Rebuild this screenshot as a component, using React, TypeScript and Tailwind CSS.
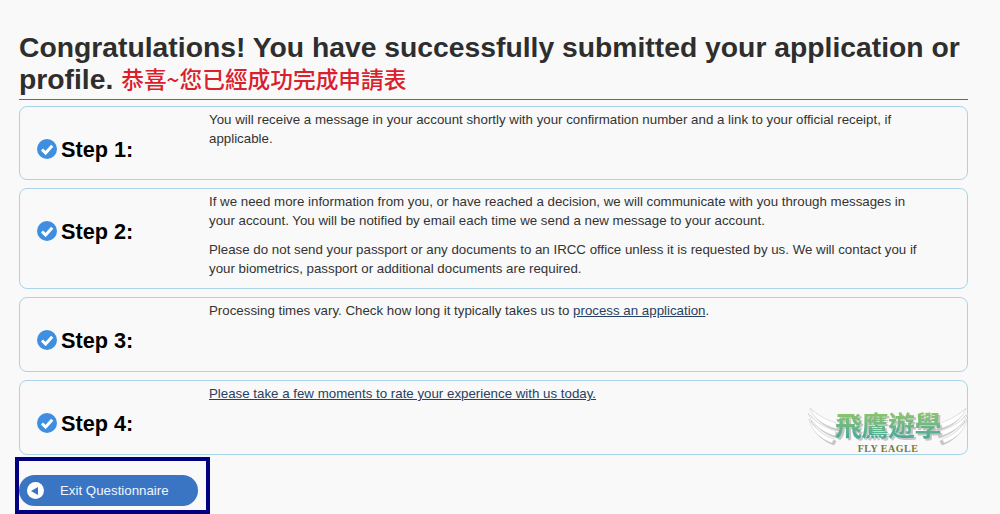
const CheckBadge = () => (
  <svg width="20" height="20" viewBox="0 0 20 20" className="mb-[3px] shrink-0">
    <circle cx="10" cy="10" r="10" fill="#3f8fe0" />
    <path d="M5 10.5 L8.6 14 L15.2 6.8" fill="none" stroke="#ffffff" strokeWidth="3" />
  </svg>
)

const Wing = ({ flip }: { flip?: boolean }) => (
  <svg
    width="30"
    height="38"
    viewBox="0 0 30 38"
    className={`drop-shadow-[2px_2px_0_#c2c2c2] ${flip ? "-scale-x-100" : ""}`}
  >
    <g fill="#ffffff" stroke="#d4d4d4" strokeWidth="0.7">
      <path d="M1 12 C3 22 10 31 24 36 L26 32 C16 29 7 22 1 12 Z" />
      <path d="M0 6 C3 15 11 24 27 29 L28 24 C17 21 7 15 0 6 Z" />
      <path d="M2 1 C4 9 13 18 29 22 L28 16 C19 13 9 8 2 1 Z" />
    </g>
  </svg>
)

const Watermark = () => (
  <div className="absolute left-[808px] top-[407px] flex h-[48px] w-[160px] items-start justify-between">
    <Wing />
    <Wing flip />
    <div className="absolute inset-0 flex flex-col items-center">
      <span className="mt-[3px] h-[30px] bg-gradient-to-b from-[#93c85f] to-[#3fa89c] bg-clip-text text-[27px] leading-[30px] font-bold tracking-[-0.5px] text-transparent drop-shadow-[2px_2px_0_#c4c4c4] font-['Noto_Sans_CJK_TC',sans-serif]">
        飛鷹遊學
      </span>
      <span className="mt-[4px] text-[10px] leading-[10px] font-bold tracking-[0.5px] text-[#77783a] font-['Liberation_Serif',serif]">
        FLY EAGLE
      </span>
    </div>
  </div>
)

function StepCard({ label, height, children }: { label: string; height: string; children: React.ReactNode }) {
  return (
    <div className={`flex rounded-[8px] border border-[#a9d3e6] ${height}`}>
      <div className="w-[189px] shrink-0 pl-[17px] pt-[30px]">
        <div className="flex items-center gap-[4px]">
          <CheckBadge />
          <span className="text-[21.7px] leading-[26px] font-bold text-black">{label}</span>
        </div>
      </div>
      <div className="flex-1 pr-[42px] pt-[3px] text-[13.3px] leading-[19px] text-[#333333]">{children}</div>
    </div>
  )
}

export default function App() {
  return (
    <div className="relative h-[514px] w-[1000px] overflow-hidden bg-[#f9f9f9] font-['Liberation_Sans',sans-serif]">
      <div className="pl-[19px] pr-[32px] pt-[32px]">
        {/* Heading */}
        <h1 className="pb-[4px] text-[28.3px] leading-[31px] font-bold text-[#2e2e2e]">
          Congratulations! You have successfully submitted your application or profile.{" "}
          <span className="align-[1px] text-[22.7px] font-medium text-[#d9202c] font-['Noto_Sans_CJK_TC',sans-serif]">
            恭喜~您已經成功完成申請表
          </span>
        </h1>
        <div className="h-px bg-[#d0394a]" />

        {/* Steps */}
        <div className="mt-[6px] flex flex-col gap-[8px]">
          <StepCard label="Step 1:" height="h-[74px]">
            <p>
              You will receive a message in your account shortly with your confirmation number and a link to your official receipt, if applicable.
            </p>
          </StepCard>
          <StepCard label="Step 2:" height="h-[101px]">
            <p>
              If we need more information from you, or have reached a decision, we will communicate with you through messages in your account. You will be notified by email each time we send a new message to your account.
            </p>
            <p className="mt-[10px]">
              Please do not send your passport or any documents to an IRCC office unless it is requested by us. We will contact you if your biometrics, passport or additional documents are required.
            </p>
          </StepCard>
          <StepCard label="Step 3:" height="h-[75px]">
            <p>
              Processing times vary. Check how long it typically takes us to{" "}
              <a className="text-[#284162] underline">process an application</a>.
            </p>
          </StepCard>
          <StepCard label="Step 4:" height="h-[75px]">
            <p>
              <a className="text-[#284162] underline">Please take a few moments to rate your experience with us today.</a>
            </p>
          </StepCard>
        </div>
      </div>

      {/* Exit button with highlight frame */}
      <div className="mt-[2px] ml-[15px] h-[57px] w-[195px] border-[4px] border-[#000080] pt-[14px]">
        <button className="flex h-[31px] w-[179px] items-center rounded-full bg-[#3a75c4] pl-[8px] text-[13.3px] text-[#f2f6fc]">
          <span className="flex h-[17px] w-[17px] items-center justify-center rounded-full bg-white">
            <span className="mr-[2px] h-0 w-0 border-y-[4px] border-r-[7px] border-y-transparent border-r-[#3a75c4]" />
          </span>
          <span className="ml-[16px]">Exit Questionnaire</span>
        </button>
      </div>

      <Watermark />
    </div>
  )
}
